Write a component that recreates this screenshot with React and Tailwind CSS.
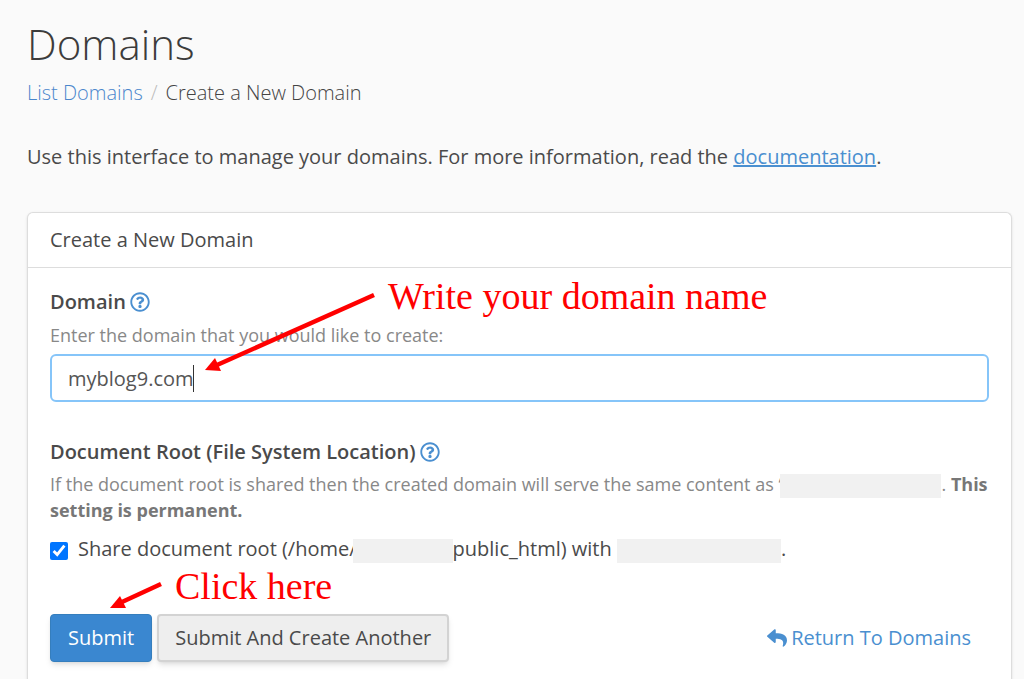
import React, { useState } from "react";
import { FaRegQuestionCircle, FaReply } from "react-icons/fa";

const HelpButton = ({ label }) => (
  <button type="button" aria-label={label} className="text-[#4a8fd0]">
    <FaRegQuestionCircle className="w-5 h-5" />
  </button>
);

// Grey block that hides a private account value
const Redacted = ({ className }) => (
  <span className={`relative inline-block h-6 bg-[#f1f1f1] align-middle ${className}`} />
);

// Red note with an arrow, drawn over the form
const Note = ({ className, children }) => (
  <p className={`absolute font-['Liberation_Serif',serif] text-[38px] leading-10 text-[#ff0000] whitespace-nowrap pointer-events-none ${className}`}>
    {children}
  </p>
);

const App = () => {
  const [domain, setDomain] = useState("myblog9.com");
  const [shareRoot, setShareRoot] = useState(true);

  return (
    <div className="min-h-screen bg-[#fafafa] pl-[27px] pr-3 pt-4 font-['Open_Sans',sans-serif] text-xl leading-7 text-[#4a4a4a]">
      <h1 className="text-[42px] leading-[56px] font-light text-[#3c3c3c]">Domains</h1>

      <nav aria-label="Breadcrumb" className="mt-[7px] flex font-light">
        <a href="#list" className="text-[#4a86cc]">List Domains</a>
        <span className="px-2 text-[#bbb]">/</span>
        <span className="text-[#444]">Create a New Domain</span>
      </nav>

      <p className="mt-9">
        Use this interface to manage your domains. For more information, read the{" "}
        <a href="#docs" className="text-[#4a8fd0] underline">documentation</a>.
      </p>

      <section className="mt-[41px] rounded-t-md border border-b-0 border-[#ddd] bg-white shadow-sm">
        <h2 className="border-b border-[#ddd] px-[22px] py-[13px]">Create a New Domain</h2>

        <form className="px-[22px] pt-5 pb-8" onSubmit={(e) => e.preventDefault()}>
          {/* Domain */}
          <div className="relative">
            <div className="flex items-center gap-1">
              <label htmlFor="domain" className="font-semibold">Domain</label>
              <HelpButton label="Domain help" />
            </div>
            <p className="mt-[7px] text-lg leading-[25px] text-[#888]">
              Enter the domain that you would like to create:
            </p>
            <div className="relative mt-[6px]">
              <input
                id="domain"
                type="text"
                value={domain}
                onChange={(e) => setDomain(e.target.value)}
                className="block w-full h-12 rounded-md border-2 border-[#86c5f9] bg-white px-4 text-[#555] caret-transparent outline-none"
              />
              {/* Text cursor */}
              <span className="absolute left-[143px] top-[11px] h-[27px] w-px bg-[#333] pointer-events-none" />
            </div>
            <Note className="left-[338px] -top-3">Write your domain name</Note>
            <svg className="absolute left-[150px] top-0 w-[180px] h-[90px] pointer-events-none" viewBox="0 0 180 90" aria-hidden="true">
              <path d="M174 7 L17 77" stroke="#ff0000" strokeWidth="4.5" />
              <path d="M5 82 L15 70 L21 83 Z" fill="#ff0000" />
            </svg>
          </div>

          {/* Document root */}
          <div className="mt-9">
            <div className="flex items-center gap-1">
              <span className="font-semibold">Document Root (File System Location)</span>
              <HelpButton label="Document root help" />
            </div>
            <p className="mt-[6px] text-lg leading-[25px] text-[#888]">
              If the document root is shared then the created domain will serve the same content as ‘
              <Redacted className="-ml-px w-[161px]" />.{" "}
              <strong className="text-[#777]">This setting is permanent.</strong>
            </p>
            <div className="mt-3 flex items-center gap-[10px]">
              <input
                id="share"
                type="checkbox"
                checked={shareRoot}
                onChange={(e) => setShareRoot(e.target.checked)}
                className="mt-1 w-[18px] h-[18px] accent-[#0075ff]"
              />
              <label htmlFor="share">
                Share document root (/home/
                <Redacted className="-ml-1 w-[100px]" />public_html) with <Redacted className="w-[164px]" />.
              </label>
            </div>
          </div>

          {/* Actions */}
          <div className="relative mt-[51px] flex items-center justify-between">
            <div className="flex gap-[5px]">
              <button type="submit" className="h-12 rounded-sm border border-[#357ebd] bg-[#3a87d0] px-[17px] text-white shadow-md">
                Submit
              </button>
              <button type="button" className="h-12 rounded-sm border-2 border-[#d3d3d3] bg-[#eee] px-4 shadow-md">
                Submit And Create Another
              </button>
            </div>
            <a href="#list" className="flex items-center gap-1 pr-[18px] text-[#4a8fd0]">
              <FaReply className="w-5 h-5" />
              Return To Domains
            </a>
            <Note className="left-[125px] -top-12">Click here</Note>
            <svg className="absolute left-[50px] -top-9 w-[70px] h-10 pointer-events-none" viewBox="0 0 70 40" aria-hidden="true">
              <path d="M61 6 L22 24" stroke="#ff0000" strokeWidth="4.5" />
              <path d="M10 30 L20 18 L26 30 Z" fill="#ff0000" />
            </svg>
          </div>
        </form>
      </section>
    </div>
  );
};

export default App;
